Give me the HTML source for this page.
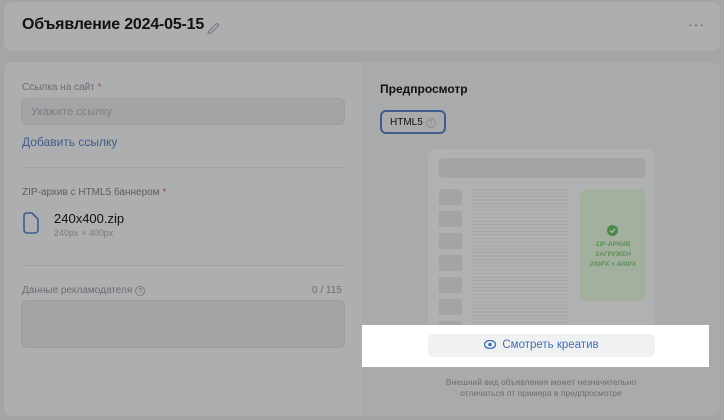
<!DOCTYPE html>
<html><head><meta charset="utf-8"><style>
*{box-sizing:border-box;margin:0;padding:0}
body{width:724px;height:420px;background:#a4a5a7;font-family:"Liberation Sans",sans-serif;position:relative;overflow:hidden}
.a{position:absolute}
.card{background:#adaeb0;border-radius:8px}
</style></head><body>
<div class="a card" style="left:4px;top:2px;width:716px;height:49px"></div>
<div class="a" style="left:22px;top:16px;font-size:16px;font-weight:bold;color:#111;letter-spacing:-0.2px">Объявление 2024-05-15</div>
<svg class="a" style="left:206px;top:20px" width="14" height="14" viewBox="0 0 14 14"><path d="M3 11 L10 4 a1.4 1.4 0 0 1 2 2 L5 13 L2 13 Z" fill="none" stroke="#7c7d80" stroke-width="1.2"/></svg>
<div class="a" style="left:688px;top:16px;font-size:14px;color:#555;letter-spacing:1px">···</div>

<div class="a card" style="left:4px;top:62px;width:716px;height:354px"></div>
<div class="a" style="left:362px;top:62px;width:358px;height:354px;background:#a9aaac;border-radius:0 8px 8px 0"></div>

<div class="a" style="left:22px;top:82px;font-size:10px;color:#6c6d70">Ссылка на сайт <span style="color:#a0484a">*</span></div>
<div class="a" style="left:21px;top:98px;width:324px;height:27px;background:#a3a4a6;border-radius:6px;border:1px solid #9c9da0"></div>
<div class="a" style="left:31px;top:106px;font-size:11px;color:#7d7e81">Укажите ссылку</div>
<div class="a" style="left:22px;top:135px;font-size:12px;color:#3f5d8c">Добавить ссылку</div>
<div class="a" style="left:22px;top:167px;width:323px;height:1px;background:#9e9fa1"></div>
<div class="a" style="left:22px;top:187px;font-size:10px;color:#5c5d60">ZIP-архив с HTML5 баннером <span style="color:#a0484a">*</span></div>
<svg class="a" style="left:23px;top:212px" width="16" height="22" viewBox="0 0 16 22"><path d="M3 1 H9 L15 7 V18 a3 3 0 0 1 -3 3 H4 a3 3 0 0 1 -3 -3 V4 a3 3 0 0 1 2 -3 Z" fill="none" stroke="#3f5d8c" stroke-width="1.6"/></svg>
<div class="a" style="left:54px;top:211px;font-size:13px;color:#111">240x400.zip</div>
<div class="a" style="left:54px;top:228px;font-size:9px;color:#7a7b7e">240px × 400px</div>
<div class="a" style="left:22px;top:265px;width:323px;height:1px;background:#9e9fa1"></div>
<div class="a" style="left:22px;top:285px;font-size:10px;color:#6c6d70">Данные рекламодателя <span style="display:inline-block;width:10px;height:10px;border:1px solid #7c7d80;border-radius:50%;font-size:7px;text-align:center;line-height:9px">?</span></div>
<div class="a" style="left:312px;top:285px;font-size:10px;color:#6c6d70">0 / 115</div>
<div class="a" style="left:21px;top:300px;width:324px;height:48px;background:#a3a4a6;border-radius:6px;border:1px solid #9c9da0"></div>

<div class="a" style="left:380px;top:82px;font-size:12px;font-weight:bold;color:#111">Предпросмотр</div>
<div class="a" style="left:380px;top:110px;width:66px;height:24px;border:2px solid #3f5d8c;border-radius:6px;font-size:10px;color:#111;padding:5px 0 0 8px">HTML5 <span style="display:inline-block;width:10px;height:10px;border:1px solid #8a8b8e;border-radius:50%;font-size:7px;text-align:center;line-height:9px;color:#8a8b8e">?</span></div>

<div class="a" style="left:428px;top:149px;width:227px;height:180px;background:#b0b1b3;border-radius:8px"></div>
<div class="a" style="left:438px;top:158px;width:208px;height:20px;background:#a3a4a6;border-radius:6px"></div>
<div class="a" style="left:439px;top:189px;width:23px;height:140px;background:repeating-linear-gradient(#a3a4a6 0 16px,transparent 16px 22px);border-radius:4px"></div>
<div class="a" style="left:471px;top:189px;width:98px;height:140px;background:repeating-linear-gradient(#a6a7a9 0 1px,transparent 1px 3.5px)"></div>
<div class="a" style="left:580px;top:189px;width:66px;height:112px;background:#a3b09e;border-radius:6px"></div>
<svg class="a" style="left:607px;top:225px" width="11" height="11" viewBox="0 0 11 11"><circle cx="5.5" cy="5.5" r="5.5" fill="#4b8a4b"/><path d="M3 5.7 L4.8 7.3 L8 4" fill="none" stroke="#b0c0ad" stroke-width="1.3"/></svg>
<div class="a" style="left:580px;top:240px;width:66px;text-align:center;font-size:6.5px;line-height:10px;color:#5e8f5a;font-weight:bold">ZIP-АРХИВ<br>ЗАГРУЖЕН<br>240PX × 400PX</div>

<div class="a" style="left:362px;top:325px;width:347px;height:42px;background:#fff"></div>
<div class="a" style="left:428px;top:334px;width:227px;height:23px;background:#f0f1f3;border-radius:5px;font-size:11.5px;color:#3f6fb0;text-align:center;line-height:23px"><svg width="12" height="9" viewBox="0 0 12 9" style="vertical-align:-1px;margin-right:6px"><ellipse cx="6" cy="4.5" rx="5.5" ry="4" fill="none" stroke="#3f6fb0" stroke-width="1.3"/><circle cx="6" cy="4.5" r="1.8" fill="#3f6fb0"/></svg>Смотреть креатив</div>
<div class="a" style="left:400px;top:377px;width:282px;text-align:center;font-size:8.5px;line-height:11px;color:#6c6d70">Внешний вид объявления может незначительно<br>отличаться от примера в предпросмотре</div>
</body></html>
